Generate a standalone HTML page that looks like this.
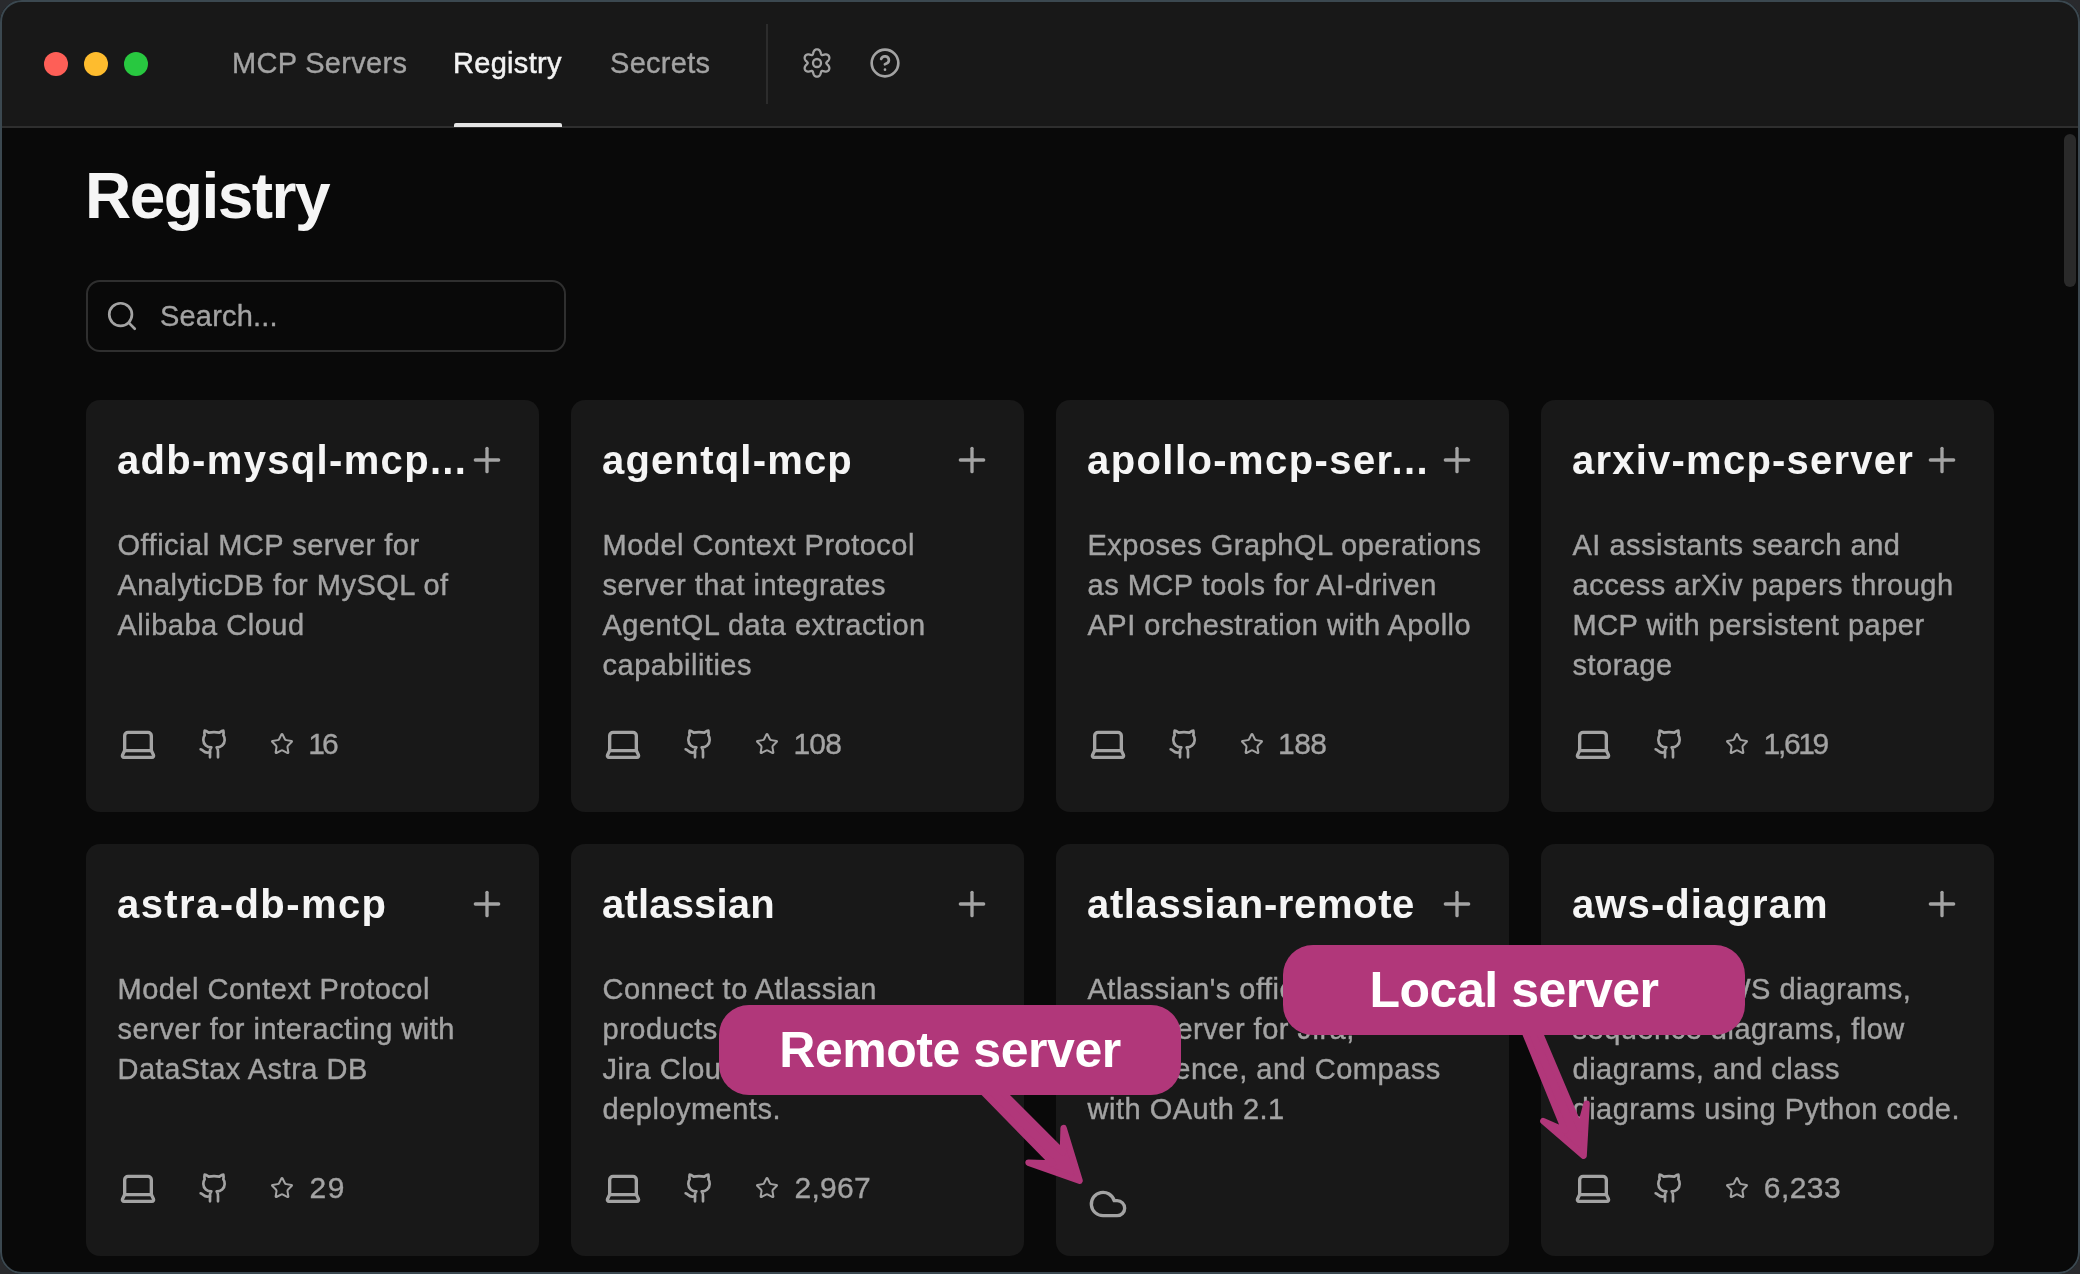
<!DOCTYPE html>
<html><head><meta charset="utf-8">
<style>
*{box-sizing:border-box;margin:0;padding:0}
html,body{width:2080px;height:1274px;overflow:hidden;background:#292a2d;font-family:"Liberation Sans",sans-serif}
#win{position:absolute;left:0;top:0;width:2080px;height:1274px;border-radius:22px;overflow:hidden;background:#090909;will-change:transform}
#hdr{position:absolute;left:0;top:0;width:2080px;height:128px;background:#181818;border-bottom:2px solid #2e2e2e}
.dot{position:absolute;top:52px;width:24px;height:24px;border-radius:50%}
.tab{position:absolute;top:42.7px;font-size:29px;line-height:40px;letter-spacing:0.3px;color:#a3a3a3;white-space:nowrap;-webkit-text-stroke:0.35px #a3a3a3}
.tab.act{color:#f2f2f2;-webkit-text-stroke:0.5px #f2f2f2}
#uline{position:absolute;left:454px;top:123px;width:108px;height:4px;background:#e5e5e5;border-radius:2px 2px 0 0}
#vsep{position:absolute;left:766px;top:24px;width:2px;height:80px;background:#2c2c2c}
svg{position:absolute;overflow:visible}
.ic{fill:none;stroke:#a3a3a3;stroke-linecap:round;stroke-linejoin:round}
#title{position:absolute;left:85px;top:161px;font-size:64px;line-height:70px;letter-spacing:-1.5px;font-weight:700;color:#f5f5f5;white-space:nowrap}
#search{position:absolute;left:86px;top:280px;width:480px;height:72px;border:2px solid #2f2f2f;border-radius:14px}
#stext{position:absolute;left:160px;top:295.7px;font-size:29px;line-height:40px;color:#a3a3a3;letter-spacing:0.2px;white-space:nowrap;-webkit-text-stroke:0.35px #a3a3a3}
.card{position:absolute;width:453px;height:412px;background:#181818;border-radius:14px}
.ct{position:absolute;font-size:40px;line-height:48px;font-weight:700;color:#f5f5f5;white-space:nowrap;letter-spacing:0.8px}
.cd{position:absolute;font-size:29px;line-height:40px;color:#a3a3a3;white-space:nowrap;letter-spacing:0.5px;-webkit-text-stroke:0.4px #a3a3a3}
.cn{position:absolute;font-size:30px;line-height:40px;color:#a3a3a3;white-space:nowrap;-webkit-text-stroke:0.35px #a3a3a3}
.bub{position:absolute;width:462px;height:90px;background:#b1377a;border-radius:30px;color:#fff;font-weight:700;font-size:50px;line-height:90px;letter-spacing:-0.45px;text-align:center;white-space:nowrap}
#sb{position:absolute;left:2064px;top:134px;width:12px;height:153px;border-radius:6px;background:#2a2a2a}
#frame{position:absolute;left:0;top:0;width:2080px;height:1274px;border:2px solid #3b4850;border-radius:22px}
</style></head><body>
<div id="win">
<div id="hdr"></div>
<div class="dot" style="left:44px;background:#fe5f57"></div>
<div class="dot" style="left:84px;background:#febc2e"></div>
<div class="dot" style="left:124px;background:#28c840"></div>
<div class="tab" style="left:232px">MCP Servers</div>
<div class="tab act" style="left:453px">Registry</div>
<div class="tab" style="left:610px">Secrets</div>
<div id="uline"></div>
<div id="vsep"></div>
<svg style="left:799px;top:45px" width="36" height="36" viewBox="0 0 36 36" class="ic" stroke-width="2.3"><path d="M27.30 18.00 L27.32 17.84 L27.37 17.67 L27.45 17.50 L27.57 17.33 L27.71 17.15 L27.87 16.96 L28.06 16.77 L28.26 16.56 L28.47 16.34 L28.69 16.12 L28.90 15.88 L29.11 15.64 L29.32 15.39 L29.51 15.13 L29.69 14.87 L29.85 14.60 L29.98 14.34 L30.10 14.07 L30.19 13.80 L30.26 13.54 L30.31 13.27 L30.33 13.02 L30.34 12.76 L30.32 12.51 L30.29 12.27 L30.23 12.03 L30.16 11.80 L30.08 11.58 L29.98 11.36 L29.86 11.15 L29.74 10.95 L29.60 10.75 L29.45 10.57 L29.28 10.39 L29.10 10.23 L28.91 10.07 L28.70 9.93 L28.48 9.81 L28.25 9.70 L28.00 9.61 L27.73 9.54 L27.45 9.49 L27.16 9.45 L26.86 9.44 L26.56 9.44 L26.24 9.47 L25.92 9.50 L25.60 9.56 L25.29 9.62 L24.97 9.69 L24.67 9.76 L24.38 9.84 L24.10 9.91 L23.84 9.97 L23.59 10.02 L23.36 10.05 L23.15 10.06 L22.97 10.05 L22.80 10.01 L22.65 9.95 L22.52 9.85 L22.40 9.72 L22.30 9.57 L22.20 9.38 L22.12 9.17 L22.04 8.93 L21.96 8.67 L21.88 8.40 L21.80 8.10 L21.71 7.80 L21.62 7.50 L21.51 7.19 L21.40 6.89 L21.27 6.60 L21.13 6.31 L20.98 6.04 L20.82 5.79 L20.65 5.56 L20.46 5.34 L20.27 5.15 L20.06 4.98 L19.85 4.83 L19.63 4.70 L19.41 4.59 L19.18 4.50 L18.95 4.42 L18.71 4.37 L18.48 4.33 L18.24 4.31 L18.00 4.30 L17.76 4.31 L17.52 4.33 L17.29 4.37 L17.05 4.42 L16.82 4.50 L16.59 4.59 L16.37 4.70 L16.15 4.83 L15.94 4.98 L15.73 5.15 L15.54 5.34 L15.35 5.56 L15.18 5.79 L15.02 6.04 L14.87 6.31 L14.73 6.60 L14.60 6.89 L14.49 7.19 L14.38 7.50 L14.29 7.80 L14.20 8.10 L14.12 8.40 L14.04 8.67 L13.96 8.93 L13.88 9.17 L13.80 9.38 L13.70 9.57 L13.60 9.72 L13.48 9.85 L13.35 9.95 L13.20 10.01 L13.03 10.05 L12.85 10.06 L12.64 10.05 L12.41 10.02 L12.16 9.97 L11.90 9.91 L11.62 9.84 L11.33 9.76 L11.03 9.69 L10.71 9.62 L10.40 9.56 L10.08 9.50 L9.76 9.47 L9.44 9.44 L9.14 9.44 L8.84 9.45 L8.55 9.49 L8.27 9.54 L8.00 9.61 L7.75 9.70 L7.52 9.81 L7.30 9.93 L7.09 10.07 L6.90 10.23 L6.72 10.39 L6.55 10.57 L6.40 10.75 L6.26 10.95 L6.14 11.15 L6.02 11.36 L5.92 11.58 L5.84 11.80 L5.77 12.03 L5.71 12.27 L5.68 12.51 L5.66 12.76 L5.67 13.02 L5.69 13.27 L5.74 13.54 L5.81 13.80 L5.90 14.07 L6.02 14.34 L6.15 14.60 L6.31 14.87 L6.49 15.13 L6.68 15.39 L6.89 15.64 L7.10 15.88 L7.31 16.12 L7.53 16.34 L7.74 16.56 L7.94 16.77 L8.13 16.96 L8.29 17.15 L8.43 17.33 L8.55 17.50 L8.63 17.67 L8.68 17.84 L8.70 18.00 L8.68 18.16 L8.63 18.33 L8.55 18.50 L8.43 18.67 L8.29 18.85 L8.13 19.04 L7.94 19.23 L7.74 19.44 L7.53 19.66 L7.31 19.88 L7.10 20.12 L6.89 20.36 L6.68 20.61 L6.49 20.87 L6.31 21.13 L6.15 21.40 L6.02 21.66 L5.90 21.93 L5.81 22.20 L5.74 22.46 L5.69 22.73 L5.67 22.98 L5.66 23.24 L5.68 23.49 L5.71 23.73 L5.77 23.97 L5.84 24.20 L5.92 24.42 L6.02 24.64 L6.14 24.85 L6.26 25.05 L6.40 25.25 L6.55 25.43 L6.72 25.61 L6.90 25.77 L7.09 25.93 L7.30 26.07 L7.52 26.19 L7.75 26.30 L8.00 26.39 L8.27 26.46 L8.55 26.51 L8.84 26.55 L9.14 26.56 L9.44 26.56 L9.76 26.53 L10.08 26.50 L10.40 26.44 L10.71 26.38 L11.03 26.31 L11.33 26.24 L11.62 26.16 L11.90 26.09 L12.16 26.03 L12.41 25.98 L12.64 25.95 L12.85 25.94 L13.03 25.95 L13.20 25.99 L13.35 26.05 L13.48 26.15 L13.60 26.28 L13.70 26.43 L13.80 26.62 L13.88 26.83 L13.96 27.07 L14.04 27.33 L14.12 27.60 L14.20 27.90 L14.29 28.20 L14.38 28.50 L14.49 28.81 L14.60 29.11 L14.73 29.40 L14.87 29.69 L15.02 29.96 L15.18 30.21 L15.35 30.44 L15.54 30.66 L15.73 30.85 L15.94 31.02 L16.15 31.17 L16.37 31.30 L16.59 31.41 L16.82 31.50 L17.05 31.58 L17.29 31.63 L17.52 31.67 L17.76 31.69 L18.00 31.70 L18.24 31.69 L18.48 31.67 L18.71 31.63 L18.95 31.58 L19.18 31.50 L19.41 31.41 L19.63 31.30 L19.85 31.17 L20.06 31.02 L20.27 30.85 L20.46 30.66 L20.65 30.44 L20.82 30.21 L20.98 29.96 L21.13 29.69 L21.27 29.40 L21.40 29.11 L21.51 28.81 L21.62 28.50 L21.71 28.20 L21.80 27.90 L21.88 27.60 L21.96 27.33 L22.04 27.07 L22.12 26.83 L22.20 26.62 L22.30 26.43 L22.40 26.28 L22.52 26.15 L22.65 26.05 L22.80 25.99 L22.97 25.95 L23.15 25.94 L23.36 25.95 L23.59 25.98 L23.84 26.03 L24.10 26.09 L24.38 26.16 L24.67 26.24 L24.97 26.31 L25.29 26.38 L25.60 26.44 L25.92 26.50 L26.24 26.53 L26.56 26.56 L26.86 26.56 L27.16 26.55 L27.45 26.51 L27.73 26.46 L28.00 26.39 L28.25 26.30 L28.48 26.19 L28.70 26.07 L28.91 25.93 L29.10 25.77 L29.28 25.61 L29.45 25.43 L29.60 25.25 L29.74 25.05 L29.86 24.85 L29.98 24.64 L30.08 24.42 L30.16 24.20 L30.23 23.97 L30.29 23.73 L30.32 23.49 L30.34 23.24 L30.33 22.98 L30.31 22.73 L30.26 22.46 L30.19 22.20 L30.10 21.93 L29.98 21.66 L29.85 21.40 L29.69 21.13 L29.51 20.87 L29.32 20.61 L29.11 20.36 L28.90 20.12 L28.69 19.88 L28.47 19.66 L28.26 19.44 L28.06 19.23 L27.87 19.04 L27.71 18.85 L27.57 18.67 L27.45 18.50 L27.37 18.33 L27.32 18.16Z"/><circle cx="18" cy="18" r="4"/></svg>
<svg class="ic" style="left:869px;top:47px" width="32" height="32" viewBox="0 0 24 24" stroke-width="2"><circle cx="12" cy="12" r="10"/><path d="M9.09 9a3 3 0 0 1 5.83 1c0 2-3 3-3 3"/><path d="M12 17h.01"/></svg>
<div id="title">Registry</div>
<div id="search"></div>
<svg class="ic" style="left:105px;top:299px" width="34" height="34" viewBox="0 0 24 24" stroke-width="1.9"><circle cx="11" cy="11" r="8"/><path d="m21 21-4.3-4.3"/></svg>
<div id="stext">Search...</div>
<div class="card" style="left:86px;top:400px"></div>
<div class="ct" style="left:117px;top:436px;letter-spacing:1.33px">adb-mysql-mcp...</div>
<svg class="ic" style="left:467px;top:440px" width="40" height="40" viewBox="0 0 24 24" stroke-width="2"><path d="M5 12h14"/><path d="M12 5v14"/></svg>
<div class="cd" style="left:117.5px;top:524.6px">Official MCP server for<br>AnalyticDB for MySQL of<br>Alibaba Cloud</div>
<svg class="ic" style="left:118px;top:724px" width="40" height="40" viewBox="0 0 24 24" stroke-width="2"><path d="M18 5a2 2 0 0 1 2 2v8.526a2 2 0 0 0 .212.897l1.068 2.127a1 1 0 0 1-.9 1.45H3.62a1 1 0 0 1-.9-1.45l1.068-2.127A2 2 0 0 0 4 15.526V7a2 2 0 0 1 2-2z"/><path d="M20.054 15.987H3.946"/></svg>
<svg class="ic" style="left:198px;top:728px" width="32" height="32" viewBox="0 0 24 24" stroke-width="2"><path d="M15 22v-4a4.8 4.8 0 0 0-1-3.5c3 0 6-2 6-5.5.08-1.25-.27-2.48-1-3.5.28-1.15.28-2.35 0-3.5 0 0-1 0-3 1.5-2.64-.5-5.36-.5-8 0C6 2 5 2 5 2c-.3 1.15-.3 2.35 0 3.5A5.403 5.403 0 0 0 4 9c0 3.5 3 5.5 6 5.5-.39.49-.68 1.05-.85 1.65-.17.6-.22 1.23-.15 1.85v4"/><path d="M9 18c-4.51 2-5-2-7-2"/></svg>
<svg class="ic" style="left:270px;top:732px" width="24" height="24" viewBox="0 0 24 24" stroke-width="2"><path d="M11.525 2.295a.53.53 0 0 1 .95 0l2.31 4.679a2.123 2.123 0 0 0 1.595 1.16l5.166.756a.53.53 0 0 1 .294.904l-3.736 3.638a2.123 2.123 0 0 0-.611 1.878l.882 5.14a.53.53 0 0 1-.771.56l-4.618-2.428a2.122 2.122 0 0 0-1.973 0L6.396 21.01a.53.53 0 0 1-.77-.56l.881-5.139a2.122 2.122 0 0 0-.611-1.879L2.16 9.795a.53.53 0 0 1 .294-.906l5.165-.755a2.122 2.122 0 0 0 1.597-1.16z"/></svg>
<div class="cn" style="left:308.3px;top:723.6px;letter-spacing:-2.9px">16</div>
<div class="card" style="left:571px;top:400px"></div>
<div class="ct" style="left:602px;top:436px;letter-spacing:1.2px">agentql-mcp</div>
<svg class="ic" style="left:952px;top:440px" width="40" height="40" viewBox="0 0 24 24" stroke-width="2"><path d="M5 12h14"/><path d="M12 5v14"/></svg>
<div class="cd" style="left:602.5px;top:524.6px">Model Context Protocol<br>server that integrates<br>AgentQL data extraction<br>capabilities</div>
<svg class="ic" style="left:603px;top:724px" width="40" height="40" viewBox="0 0 24 24" stroke-width="2"><path d="M18 5a2 2 0 0 1 2 2v8.526a2 2 0 0 0 .212.897l1.068 2.127a1 1 0 0 1-.9 1.45H3.62a1 1 0 0 1-.9-1.45l1.068-2.127A2 2 0 0 0 4 15.526V7a2 2 0 0 1 2-2z"/><path d="M20.054 15.987H3.946"/></svg>
<svg class="ic" style="left:683px;top:728px" width="32" height="32" viewBox="0 0 24 24" stroke-width="2"><path d="M15 22v-4a4.8 4.8 0 0 0-1-3.5c3 0 6-2 6-5.5.08-1.25-.27-2.48-1-3.5.28-1.15.28-2.35 0-3.5 0 0-1 0-3 1.5-2.64-.5-5.36-.5-8 0C6 2 5 2 5 2c-.3 1.15-.3 2.35 0 3.5A5.403 5.403 0 0 0 4 9c0 3.5 3 5.5 6 5.5-.39.49-.68 1.05-.85 1.65-.17.6-.22 1.23-.15 1.85v4"/><path d="M9 18c-4.51 2-5-2-7-2"/></svg>
<svg class="ic" style="left:755px;top:732px" width="24" height="24" viewBox="0 0 24 24" stroke-width="2"><path d="M11.525 2.295a.53.53 0 0 1 .95 0l2.31 4.679a2.123 2.123 0 0 0 1.595 1.16l5.166.756a.53.53 0 0 1 .294.904l-3.736 3.638a2.123 2.123 0 0 0-.611 1.878l.882 5.14a.53.53 0 0 1-.771.56l-4.618-2.428a2.122 2.122 0 0 0-1.973 0L6.396 21.01a.53.53 0 0 1-.77-.56l.881-5.139a2.122 2.122 0 0 0-.611-1.879L2.16 9.795a.53.53 0 0 1 .294-.906l5.165-.755a2.122 2.122 0 0 0 1.597-1.16z"/></svg>
<div class="cn" style="left:793.5px;top:723.6px;letter-spacing:-0.85px">108</div>
<div class="card" style="left:1056px;top:400px"></div>
<div class="ct" style="left:1087px;top:436px;letter-spacing:1.42px">apollo-mcp-ser...</div>
<svg class="ic" style="left:1437px;top:440px" width="40" height="40" viewBox="0 0 24 24" stroke-width="2"><path d="M5 12h14"/><path d="M12 5v14"/></svg>
<div class="cd" style="left:1087.5px;top:524.6px">Exposes GraphQL operations<br>as MCP tools for AI-driven<br>API orchestration with Apollo</div>
<svg class="ic" style="left:1088px;top:724px" width="40" height="40" viewBox="0 0 24 24" stroke-width="2"><path d="M18 5a2 2 0 0 1 2 2v8.526a2 2 0 0 0 .212.897l1.068 2.127a1 1 0 0 1-.9 1.45H3.62a1 1 0 0 1-.9-1.45l1.068-2.127A2 2 0 0 0 4 15.526V7a2 2 0 0 1 2-2z"/><path d="M20.054 15.987H3.946"/></svg>
<svg class="ic" style="left:1168px;top:728px" width="32" height="32" viewBox="0 0 24 24" stroke-width="2"><path d="M15 22v-4a4.8 4.8 0 0 0-1-3.5c3 0 6-2 6-5.5.08-1.25-.27-2.48-1-3.5.28-1.15.28-2.35 0-3.5 0 0-1 0-3 1.5-2.64-.5-5.36-.5-8 0C6 2 5 2 5 2c-.3 1.15-.3 2.35 0 3.5A5.403 5.403 0 0 0 4 9c0 3.5 3 5.5 6 5.5-.39.49-.68 1.05-.85 1.65-.17.6-.22 1.23-.15 1.85v4"/><path d="M9 18c-4.51 2-5-2-7-2"/></svg>
<svg class="ic" style="left:1240px;top:732px" width="24" height="24" viewBox="0 0 24 24" stroke-width="2"><path d="M11.525 2.295a.53.53 0 0 1 .95 0l2.31 4.679a2.123 2.123 0 0 0 1.595 1.16l5.166.756a.53.53 0 0 1 .294.904l-3.736 3.638a2.123 2.123 0 0 0-.611 1.878l.882 5.14a.53.53 0 0 1-.771.56l-4.618-2.428a2.122 2.122 0 0 0-1.973 0L6.396 21.01a.53.53 0 0 1-.77-.56l.881-5.139a2.122 2.122 0 0 0-.611-1.879L2.16 9.795a.53.53 0 0 1 .294-.906l5.165-.755a2.122 2.122 0 0 0 1.597-1.16z"/></svg>
<div class="cn" style="left:1278px;top:723.6px;letter-spacing:-0.55px">188</div>
<div class="card" style="left:1541px;top:400px"></div>
<div class="ct" style="left:1572px;top:436px;letter-spacing:1.23px">arxiv-mcp-server</div>
<svg class="ic" style="left:1922px;top:440px" width="40" height="40" viewBox="0 0 24 24" stroke-width="2"><path d="M5 12h14"/><path d="M12 5v14"/></svg>
<div class="cd" style="left:1572.5px;top:524.6px">AI assistants search and<br>access arXiv papers through<br>MCP with persistent paper<br>storage</div>
<svg class="ic" style="left:1573px;top:724px" width="40" height="40" viewBox="0 0 24 24" stroke-width="2"><path d="M18 5a2 2 0 0 1 2 2v8.526a2 2 0 0 0 .212.897l1.068 2.127a1 1 0 0 1-.9 1.45H3.62a1 1 0 0 1-.9-1.45l1.068-2.127A2 2 0 0 0 4 15.526V7a2 2 0 0 1 2-2z"/><path d="M20.054 15.987H3.946"/></svg>
<svg class="ic" style="left:1653px;top:728px" width="32" height="32" viewBox="0 0 24 24" stroke-width="2"><path d="M15 22v-4a4.8 4.8 0 0 0-1-3.5c3 0 6-2 6-5.5.08-1.25-.27-2.48-1-3.5.28-1.15.28-2.35 0-3.5 0 0-1 0-3 1.5-2.64-.5-5.36-.5-8 0C6 2 5 2 5 2c-.3 1.15-.3 2.35 0 3.5A5.403 5.403 0 0 0 4 9c0 3.5 3 5.5 6 5.5-.39.49-.68 1.05-.85 1.65-.17.6-.22 1.23-.15 1.85v4"/><path d="M9 18c-4.51 2-5-2-7-2"/></svg>
<svg class="ic" style="left:1725px;top:732px" width="24" height="24" viewBox="0 0 24 24" stroke-width="2"><path d="M11.525 2.295a.53.53 0 0 1 .95 0l2.31 4.679a2.123 2.123 0 0 0 1.595 1.16l5.166.756a.53.53 0 0 1 .294.904l-3.736 3.638a2.123 2.123 0 0 0-.611 1.878l.882 5.14a.53.53 0 0 1-.771.56l-4.618-2.428a2.122 2.122 0 0 0-1.973 0L6.396 21.01a.53.53 0 0 1-.77-.56l.881-5.139a2.122 2.122 0 0 0-.611-1.879L2.16 9.795a.53.53 0 0 1 .294-.906l5.165-.755a2.122 2.122 0 0 0 1.597-1.16z"/></svg>
<div class="cn" style="left:1763.6px;top:723.6px;letter-spacing:-2.35px">1,619</div>
<div class="card" style="left:86px;top:844px"></div>
<div class="ct" style="left:117px;top:880px;letter-spacing:1.42px">astra-db-mcp</div>
<svg class="ic" style="left:467px;top:884px" width="40" height="40" viewBox="0 0 24 24" stroke-width="2"><path d="M5 12h14"/><path d="M12 5v14"/></svg>
<div class="cd" style="left:117.5px;top:968.6px">Model Context Protocol<br>server for interacting with<br>DataStax Astra DB</div>
<svg class="ic" style="left:118px;top:1168px" width="40" height="40" viewBox="0 0 24 24" stroke-width="2"><path d="M18 5a2 2 0 0 1 2 2v8.526a2 2 0 0 0 .212.897l1.068 2.127a1 1 0 0 1-.9 1.45H3.62a1 1 0 0 1-.9-1.45l1.068-2.127A2 2 0 0 0 4 15.526V7a2 2 0 0 1 2-2z"/><path d="M20.054 15.987H3.946"/></svg>
<svg class="ic" style="left:198px;top:1172px" width="32" height="32" viewBox="0 0 24 24" stroke-width="2"><path d="M15 22v-4a4.8 4.8 0 0 0-1-3.5c3 0 6-2 6-5.5.08-1.25-.27-2.48-1-3.5.28-1.15.28-2.35 0-3.5 0 0-1 0-3 1.5-2.64-.5-5.36-.5-8 0C6 2 5 2 5 2c-.3 1.15-.3 2.35 0 3.5A5.403 5.403 0 0 0 4 9c0 3.5 3 5.5 6 5.5-.39.49-.68 1.05-.85 1.65-.17.6-.22 1.23-.15 1.85v4"/><path d="M9 18c-4.51 2-5-2-7-2"/></svg>
<svg class="ic" style="left:270px;top:1176px" width="24" height="24" viewBox="0 0 24 24" stroke-width="2"><path d="M11.525 2.295a.53.53 0 0 1 .95 0l2.31 4.679a2.123 2.123 0 0 0 1.595 1.16l5.166.756a.53.53 0 0 1 .294.904l-3.736 3.638a2.123 2.123 0 0 0-.611 1.878l.882 5.14a.53.53 0 0 1-.771.56l-4.618-2.428a2.122 2.122 0 0 0-1.973 0L6.396 21.01a.53.53 0 0 1-.77-.56l.881-5.139a2.122 2.122 0 0 0-.611-1.879L2.16 9.795a.53.53 0 0 1 .294-.906l5.165-.755a2.122 2.122 0 0 0 1.597-1.16z"/></svg>
<div class="cn" style="left:309.6px;top:1167.6px;letter-spacing:1.5px">29</div>
<div class="card" style="left:571px;top:844px"></div>
<div class="ct" style="left:602px;top:880px;letter-spacing:0.18px">atlassian</div>
<svg class="ic" style="left:952px;top:884px" width="40" height="40" viewBox="0 0 24 24" stroke-width="2"><path d="M5 12h14"/><path d="M12 5v14"/></svg>
<div class="cd" style="left:602.5px;top:968.6px">Connect to Atlassian<br>products including Jira and<br>Jira Cloud and Server/Data<br>deployments.</div>
<svg class="ic" style="left:603px;top:1168px" width="40" height="40" viewBox="0 0 24 24" stroke-width="2"><path d="M18 5a2 2 0 0 1 2 2v8.526a2 2 0 0 0 .212.897l1.068 2.127a1 1 0 0 1-.9 1.45H3.62a1 1 0 0 1-.9-1.45l1.068-2.127A2 2 0 0 0 4 15.526V7a2 2 0 0 1 2-2z"/><path d="M20.054 15.987H3.946"/></svg>
<svg class="ic" style="left:683px;top:1172px" width="32" height="32" viewBox="0 0 24 24" stroke-width="2"><path d="M15 22v-4a4.8 4.8 0 0 0-1-3.5c3 0 6-2 6-5.5.08-1.25-.27-2.48-1-3.5.28-1.15.28-2.35 0-3.5 0 0-1 0-3 1.5-2.64-.5-5.36-.5-8 0C6 2 5 2 5 2c-.3 1.15-.3 2.35 0 3.5A5.403 5.403 0 0 0 4 9c0 3.5 3 5.5 6 5.5-.39.49-.68 1.05-.85 1.65-.17.6-.22 1.23-.15 1.85v4"/><path d="M9 18c-4.51 2-5-2-7-2"/></svg>
<svg class="ic" style="left:755px;top:1176px" width="24" height="24" viewBox="0 0 24 24" stroke-width="2"><path d="M11.525 2.295a.53.53 0 0 1 .95 0l2.31 4.679a2.123 2.123 0 0 0 1.595 1.16l5.166.756a.53.53 0 0 1 .294.904l-3.736 3.638a2.123 2.123 0 0 0-.611 1.878l.882 5.14a.53.53 0 0 1-.771.56l-4.618-2.428a2.122 2.122 0 0 0-1.973 0L6.396 21.01a.53.53 0 0 1-.77-.56l.881-5.139a2.122 2.122 0 0 0-.611-1.879L2.16 9.795a.53.53 0 0 1 .294-.906l5.165-.755a2.122 2.122 0 0 0 1.597-1.16z"/></svg>
<div class="cn" style="left:794.5px;top:1167.6px;letter-spacing:0.25px">2,967</div>
<div class="card" style="left:1056px;top:844px"></div>
<div class="ct" style="left:1087px;top:880px;letter-spacing:0.63px">atlassian-remote</div>
<svg class="ic" style="left:1437px;top:884px" width="40" height="40" viewBox="0 0 24 24" stroke-width="2"><path d="M5 12h14"/><path d="M12 5v14"/></svg>
<div class="cd" style="left:1087.5px;top:968.6px">Atlassian's official remote<br>MCP server for Jira,<br>Confluence, and Compass<br>with OAuth 2.1</div>
<svg class="ic" style="left:1088px;top:1184px" width="40" height="40" viewBox="0 0 24 24" stroke-width="2"><path d="M17.5 19H9a7 7 0 1 1 6.71-9h1.79a4.5 4.5 0 1 1 0 9Z"/></svg>
<div class="card" style="left:1541px;top:844px"></div>
<div class="ct" style="left:1572px;top:880px;letter-spacing:1.1px">aws-diagram</div>
<svg class="ic" style="left:1922px;top:884px" width="40" height="40" viewBox="0 0 24 24" stroke-width="2"><path d="M5 12h14"/><path d="M12 5v14"/></svg>
<div class="cd" style="left:1572.5px;top:968.6px">Generate AWS diagrams,<br>sequence diagrams, flow<br>diagrams, and class<br>diagrams using Python code.</div>
<svg class="ic" style="left:1573px;top:1168px" width="40" height="40" viewBox="0 0 24 24" stroke-width="2"><path d="M18 5a2 2 0 0 1 2 2v8.526a2 2 0 0 0 .212.897l1.068 2.127a1 1 0 0 1-.9 1.45H3.62a1 1 0 0 1-.9-1.45l1.068-2.127A2 2 0 0 0 4 15.526V7a2 2 0 0 1 2-2z"/><path d="M20.054 15.987H3.946"/></svg>
<svg class="ic" style="left:1653px;top:1172px" width="32" height="32" viewBox="0 0 24 24" stroke-width="2"><path d="M15 22v-4a4.8 4.8 0 0 0-1-3.5c3 0 6-2 6-5.5.08-1.25-.27-2.48-1-3.5.28-1.15.28-2.35 0-3.5 0 0-1 0-3 1.5-2.64-.5-5.36-.5-8 0C6 2 5 2 5 2c-.3 1.15-.3 2.35 0 3.5A5.403 5.403 0 0 0 4 9c0 3.5 3 5.5 6 5.5-.39.49-.68 1.05-.85 1.65-.17.6-.22 1.23-.15 1.85v4"/><path d="M9 18c-4.51 2-5-2-7-2"/></svg>
<svg class="ic" style="left:1725px;top:1176px" width="24" height="24" viewBox="0 0 24 24" stroke-width="2"><path d="M11.525 2.295a.53.53 0 0 1 .95 0l2.31 4.679a2.123 2.123 0 0 0 1.595 1.16l5.166.756a.53.53 0 0 1 .294.904l-3.736 3.638a2.123 2.123 0 0 0-.611 1.878l.882 5.14a.53.53 0 0 1-.771.56l-4.618-2.428a2.122 2.122 0 0 0-1.973 0L6.396 21.01a.53.53 0 0 1-.77-.56l.881-5.139a2.122 2.122 0 0 0-.611-1.879L2.16 9.795a.53.53 0 0 1 .294-.906l5.165-.755a2.122 2.122 0 0 0 1.597-1.16z"/></svg>
<div class="cn" style="left:1763.8px;top:1167.6px;letter-spacing:0.45px">6,233</div>
<div id="sb"></div>
<svg style="left:0;top:0" width="2080" height="1274"><polygon points="974.6,1083.2 1053.1,1163.5 1028.5,1162.8 1079.6,1180.7 1063.6,1128.1 1062.9,1152.5 993.7,1083.2" fill="#b1377a" stroke="#b1377a" stroke-width="6.4" stroke-linejoin="round"/><polygon points="1521.2,1023.2 1564.9,1130.6 1543.3,1121.1 1583.6,1155.7 1586.6,1103.7 1580.0,1128.3 1535.6,1023.2" fill="#b1377a" stroke="#b1377a" stroke-width="6.4" stroke-linejoin="round"/></svg>
<div class="bub" style="left:719px;top:1005px">Remote server</div>
<div class="bub" style="left:1283px;top:945px">Local server</div>
</div>
<div id="frame"></div>
</body></html>
